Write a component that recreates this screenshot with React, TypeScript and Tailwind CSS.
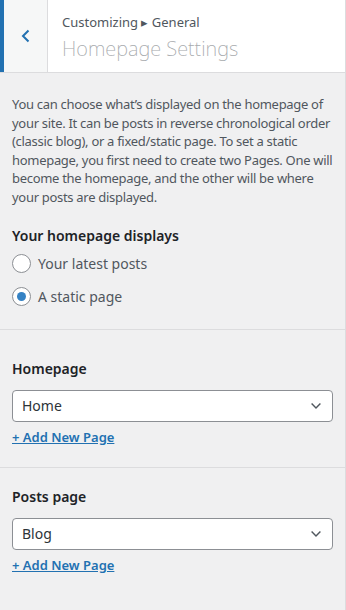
import React from "react";

const font = { fontFamily: '"Noto Sans", "Open Sans", sans-serif' };

function Radio({ label, checked }: { label: string; checked?: boolean }) {
  return (
    <label className="flex items-center gap-[7px] h-[33px]">
      <span className="w-[19px] h-[19px] rounded-full border border-[#8c8f94] bg-white flex items-center justify-center">
        {checked && <span className="w-[9px] h-[9px] rounded-full bg-[#3582c4]" />}
      </span>
      <span className="text-[14px] text-[#50575e]">{label}</span>
    </label>
  );
}

function PageSelect({ title, value, top }: { title: string; value: string; top: string }) {
  return (
    <div className={`px-3 pb-[20px] border-t border-[#dcdcde] ${top}`}>
      <h3 className="text-[14px] font-semibold text-[#1d2327] leading-[20px]">{title}</h3>
      <div className="mt-[11px] h-[32px] w-[321px] rounded-[4px] border border-[#8c8f94] bg-white flex items-center justify-between pl-[9px] pr-[8px]">
        <span className="text-[14px] text-[#2c3338]">{value}</span>
        <svg width="16" height="16" viewBox="0 0 20 20" fill="none">
          <path d="M4.5 7l5.5 5.5 5.5-5.5" stroke="#50575e" strokeWidth="1.8" />
        </svg>
      </div>
      <a className="block mt-[5px] text-[13px] font-semibold text-[#2271b1] underline leading-[20px]">+ Add New Page</a>
    </div>
  );
}

export default function App() {
  return (
    <div className="w-[346px] h-[610px] bg-[#f0f0f1] border-r border-[#dcdcde]" style={font}>
      {/* header */}
      <div className="flex h-[73px] bg-white border-b border-[#dcdcde]">
        <div className="w-[4px] bg-[#2271b1]" />
        <div className="w-[44px] bg-[#f6f7f7] border-r border-[#dcdcde] flex items-center justify-center">
          <svg width="12" height="14" viewBox="0 0 12 14" fill="none">
            <path d="M8.5 1.5L3 7l5.5 5.5" stroke="#2271b1" strokeWidth="2" />
          </svg>
        </div>
        <div className="pl-[14px] pt-[12px]">
          <div className="text-[13px] text-[#50575e] leading-[20px]">Customizing ▸ General</div>
          <div className="text-[20px] font-extralight text-[#a7aaad] leading-[32px] mt-[1px]">Homepage Settings</div>
        </div>
      </div>

      {/* description and radios */}
      <div className="px-3 pt-[22px] pb-[16px]">
        <p className="text-[13px] leading-[18.6px] text-[#50575e] tracking-[-0.3px]">
          You can choose what’s displayed on the homepage of your site. It can be posts in reverse chronological order (classic blog), or a fixed/static page. To set a static homepage, you first need to create two Pages. One will become the homepage, and the other will be where your posts are displayed.
        </p>
        <h3 className="mt-[19px] text-[14px] font-semibold text-[#1d2327] leading-[20px]">Your homepage displays</h3>
        <div className="mt-[1px]">
          <Radio label="Your latest posts" />
          <Radio label="A static page" checked />
        </div>
      </div>

      <PageSelect title="Homepage" value="Home" top="pt-[29px]" />
      <PageSelect title="Posts page" value="Blog" top="pt-[19px]" />
    </div>
  );
}
